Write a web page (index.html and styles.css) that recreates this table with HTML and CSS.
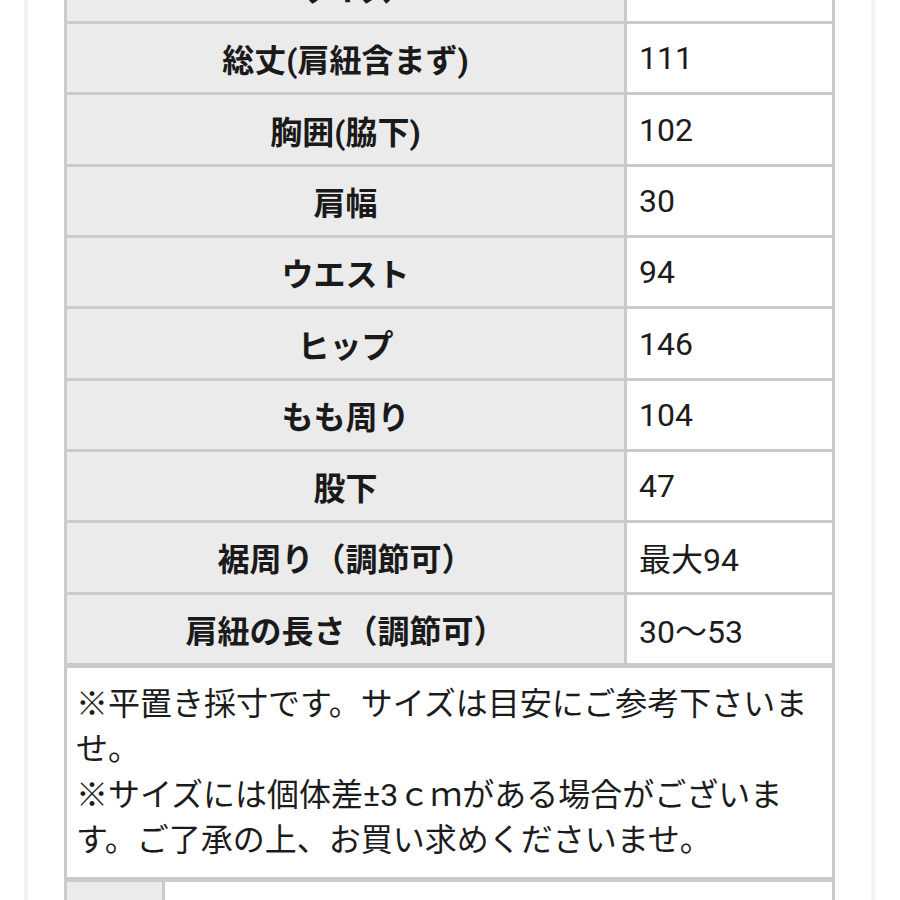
FILE: index.html
```html
<!DOCTYPE html>
<html lang="ja">
<head>
<meta charset="utf-8">
<link rel="stylesheet" href="styles.css">
</head>
<body>
<div class="frame">
  <div class="sheet">
    <div class="label">サイズ</div><div class="value"></div>
    <div class="label">総丈(肩紐含まず)</div><div class="value">111</div>
    <div class="label">胸囲(脇下)</div><div class="value">102</div>
    <div class="label">肩幅</div><div class="value">30</div>
    <div class="label">ウエスト</div><div class="value">94</div>
    <div class="label">ヒップ</div><div class="value">146</div>
    <div class="label">もも周り</div><div class="value">104</div>
    <div class="label">股下</div><div class="value">47</div>
    <div class="label">裾周り（調節可）</div><div class="value">最大94</div>
    <div class="label">肩紐の長さ（調節可）</div><div class="value">30～53</div>
  </div>
  <div class="note">
    <p>※平置き採寸です。サイズは目安にご参考下さいませ。</p>
    <p>※サイズには個体差±3ｃｍがある場合がございます。ご了承の上、お買い求めくださいませ。</p>
  </div>
  <div class="next">
    <div class="next-label"></div><div class="next-value"></div>
  </div>
</div>
</body>
</html>
```
FILE: styles.css
```css
html, body {
  margin: 0;
  padding: 0;
  background: #ffffff;
}
body {
  font-family: Roboto, "Noto Sans CJK JP", sans-serif;
  color: #1c1c1c;
  overflow: hidden;
}
.frame {
  width: 771px;
  margin: -50.3px 0 0 24px;
  border-left: 4px solid #f3f3f3;
  border-right: 4px solid #f3f3f3;
  padding: 0 36px;
  box-sizing: content-box;
}
.sheet {
  display: grid;
  grid-template-columns: 557px 205px;
  grid-auto-rows: 68.33px;
  gap: 3px;
  padding: 3px;
  background: #cbcbcb;
  width: max-content;
}
.label {
  background: #ebebeb;
  display: flex;
  align-items: center;
  justify-content: center;
  font-size: 32px;
  font-weight: 700;
  color: #1a1a1a;
}
.value {
  background: #ffffff;
  display: flex;
  align-items: center;
  padding-left: 12px;
  font-size: 32px;
  color: #1c1c1c;
}
.note {
  width: 771px;
  box-sizing: border-box;
  border: 3px solid #cbcbcb;
  border-top: 2px solid #cbcbcb;
  border-bottom: 2px solid #cbcbcb;
  padding: 14px 18px 13px 9px;
  font-size: 32px;
  line-height: 45.5px;
  background: #ffffff;
}
.note p {
  margin: 0;
}
.next {
  display: grid;
  grid-template-columns: 95px 667px;
  gap: 3px;
  padding: 3px;
  background: #cbcbcb;
  width: max-content;
}
.next-label {
  background: #ebebeb;
  height: 60px;
}
.next-value {
  background: #ffffff;
  height: 60px;
}
```
